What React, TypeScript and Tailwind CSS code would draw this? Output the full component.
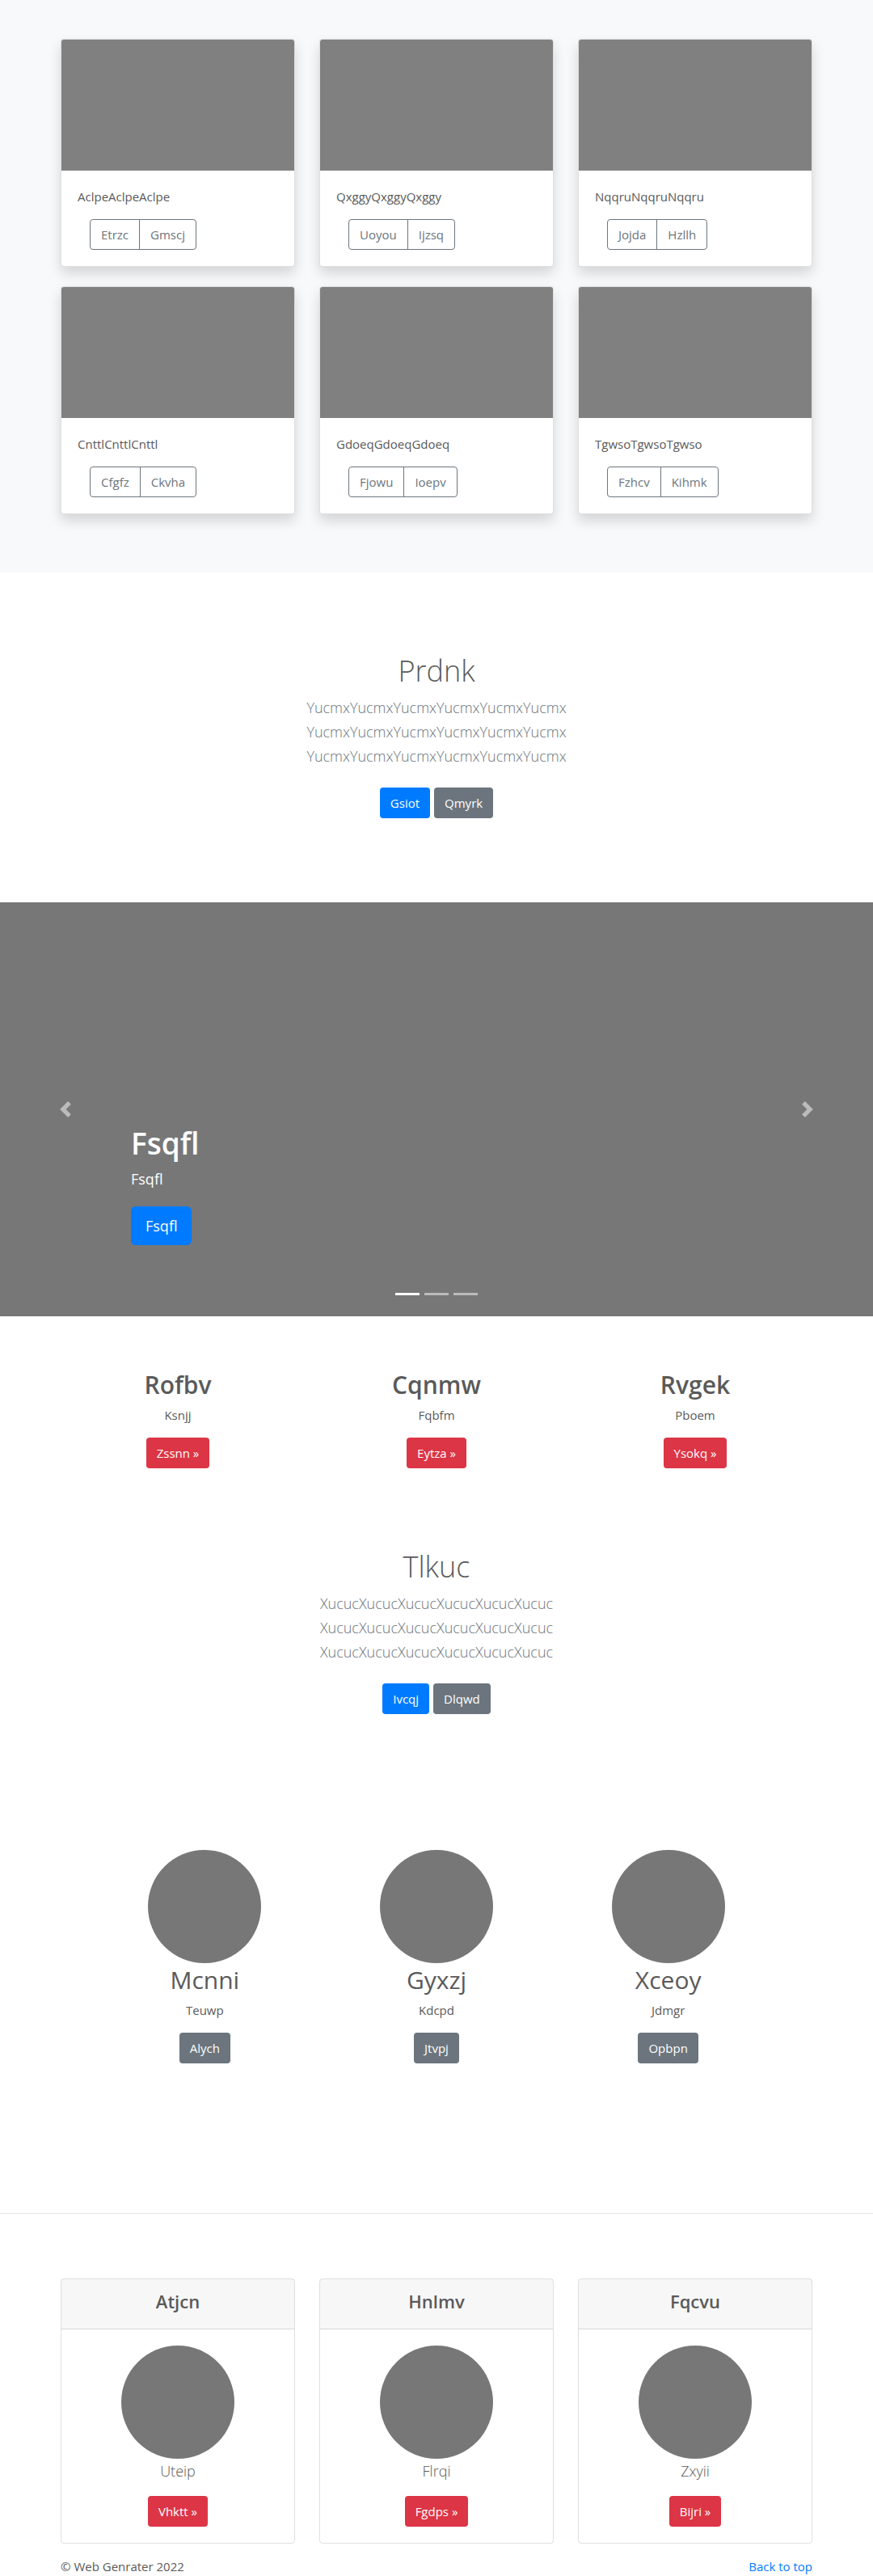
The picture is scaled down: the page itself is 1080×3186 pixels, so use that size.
const albumCards = [
  { text: "AclpeAclpeAclpe", actions: ["Etrzc", "Gmscj"] },
  { text: "QxggyQxggyQxggy", actions: ["Uoyou", "Ijzsq"] },
  { text: "NqqruNqqruNqqru", actions: ["Jojda", "Hzllh"] },
  { text: "CnttlCnttlCnttl", actions: ["Cfgfz", "Ckvha"] },
  { text: "GdoeqGdoeqGdoeq", actions: ["Fjowu", "Ioepv"] },
  { text: "TgwsoTgwsoTgwso", actions: ["Fzhcv", "Kihmk"] },
];

const features = [
  { title: "Rofbv", text: "Ksnjj", action: "Zssnn »" },
  { title: "Cqnmw", text: "Fqbfm", action: "Eytza »" },
  { title: "Rvgek", text: "Pboem", action: "Ysokq »" },
];

const profiles = [
  { title: "Mcnni", text: "Teuwp", action: "Alych" },
  { title: "Gyxzj", text: "Kdcpd", action: "Jtvpj" },
  { title: "Xceoy", text: "Jdmgr", action: "Opbpn" },
];

const plans = [
  { title: "Atjcn", text: "Uteip", action: "Vhktt »" },
  { title: "Hnlmv", text: "Flrqi", action: "Fgdps »" },
  { title: "Fqcvu", text: "Zxyii", action: "Bijri »" },
];

const tones = {
  primary: "bg-[#007bff]",
  secondary: "bg-[#6c757d]",
  danger: "bg-[#dc3545]",
};

function Button({ tone, children }: { tone: keyof typeof tones; children: string }) {
  return (
    <button type="button" className={`h-[38px] rounded px-[13px] text-white ${tones[tone]}`}>
      {children}
    </button>
  );
}

function AlbumCard({ text, actions }: { text: string; actions: string[] }) {
  return (
    <article className="rounded border border-black/[0.125] bg-white bg-clip-border shadow-[0_8px_16px_rgba(0,0,0,0.15)]">
      <div className="h-[162px] rounded-t-[3px] bg-[#808080]" />
      <div className="p-5">
        <p className="mb-4">{text}</p>
        <div className="ml-[15px] flex text-[#6c757d]">
          <button type="button" className="h-[38px] rounded-l border border-[#6c757d] px-[13px]">
            {actions[0]}
          </button>
          <button type="button" className="-ml-px h-[38px] rounded-r border border-[#6c757d] px-[13px]">
            {actions[1]}
          </button>
        </div>
      </div>
    </article>
  );
}

function Hero({ title, line, primary, secondary }: { title: string; line: string; primary: string; secondary: string }) {
  return (
    <section className="px-4 pt-24 pb-[104px] text-center">
      <h1 className="mb-1 text-[36px] leading-[52px] font-light">{title}</h1>
      <div className="mb-6 text-[18px] leading-[30px] font-light text-[#6c757d]">
        <p>{line}</p>
        <p>{line}</p>
        <p>{line}</p>
      </div>
      <div className="flex justify-center gap-[5px]">
        <Button tone="primary">{primary}</Button>
        <Button tone="secondary">{secondary}</Button>
      </div>
    </section>
  );
}

function Carousel() {
  return (
    <section aria-label="Carousel" className="relative flex h-[512px] flex-col justify-end bg-[#777] px-[15%] pb-[88px] text-white">
      <h1 className="mb-1 text-[37px] leading-[52px] font-semibold">Fsqfl</h1>
      <p className="mb-5 text-[18px] leading-7">Fsqfl</p>
      <div>
        <button type="button" className="h-12 rounded-md bg-[#007bff] px-[18px] text-[18px]">
          Fsqfl
        </button>
      </div>
      <button type="button" aria-label="Previous" className="absolute inset-y-0 left-0 flex w-[15%] items-center justify-center opacity-50">
        <svg viewBox="0 0 8 8" className="size-5" fill="#fff">
          <path d="M5.25 0l-4 4 4 4 1.5-1.5L4.25 4l2.5-2.5L5.25 0z" />
        </svg>
      </button>
      <button type="button" aria-label="Next" className="absolute inset-y-0 right-0 flex w-[15%] items-center justify-center opacity-50">
        <svg viewBox="0 0 8 8" className="size-5" fill="#fff">
          <path d="M2.75 0l-1.5 1.5L3.75 4l-2.5 2.5L2.75 8l4-4-4-4z" />
        </svg>
      </button>
      <div className="absolute inset-x-0 bottom-[26px] flex justify-center gap-1.5">
        <button type="button" aria-label="Slide 1" className="h-[3px] w-[30px] bg-white" />
        <button type="button" aria-label="Slide 2" className="h-[3px] w-[30px] bg-white/50" />
        <button type="button" aria-label="Slide 3" className="h-[3px] w-[30px] bg-white/50" />
      </div>
    </section>
  );
}

export default function App() {
  return (
    <div className="bg-white font-['Open_Sans',sans-serif] text-[15px] leading-6 text-[#5a5a5a]">
      <section className="bg-[#f8f9fa] pt-12 pb-[72px]">
        <div className="mx-auto grid max-w-[960px] grid-cols-3 gap-x-[30px] gap-y-6 px-[15px]">
          {albumCards.map((card) => (
            <AlbumCard key={card.text} {...card} />
          ))}
        </div>
      </section>

      <Hero title="Prdnk" line="YucmxYucmxYucmxYucmxYucmxYucmx" primary="Gsiot" secondary="Qmyrk" />

      <Carousel />

      <section className="mx-auto grid max-w-[960px] grid-cols-3 pt-16 text-center">
        {features.map((item) => (
          <div key={item.title}>
            <h2 className="mb-1 text-[30px] leading-[42px] font-semibold">{item.title}</h2>
            <p className="mb-4">{item.text}</p>
            <Button tone="danger">{item.action}</Button>
          </div>
        ))}
      </section>

      <Hero title="Tlkuc" line="XucucXucucXucucXucucXucucXucuc" primary="Ivcqj" secondary="Dlqwd" />

      <section className="mx-auto grid max-w-[960px] grid-cols-3 px-[50px] pt-16 pb-[105px] text-center">
        {profiles.map((item) => (
          <div key={item.title}>
            <div className="mx-auto size-[140px] rounded-full bg-[#777]" />
            <h2 className="mb-1 text-[30px] leading-[42px]">{item.title}</h2>
            <p className="mb-4">{item.text}</p>
            <Button tone="secondary">{item.action}</Button>
          </div>
        ))}
      </section>

      <hr className="my-20 border-t border-black/10" />

      <section className="mx-auto grid max-w-[960px] grid-cols-3 gap-x-[30px] px-[15px] text-center">
        {plans.map((item) => (
          <article key={item.title} className="rounded border border-black/[0.125]">
            <div className="border-b border-black/[0.125] bg-black/[0.03] pt-3 pb-[18px]">
              <h4 className="text-[22px] leading-[31px] font-semibold">{item.title}</h4>
            </div>
            <div className="p-5">
              <div className="mx-auto size-[140px] rounded-full bg-[#777]" />
              <p className="mb-4 text-[18px] leading-[30px] font-light">{item.text}</p>
              <Button tone="danger">{item.action}</Button>
            </div>
          </article>
        ))}
      </section>

      <footer className="mx-auto flex max-w-[960px] justify-between px-[15px] pt-4">
        <p>© Web Genrater 2022</p>
        <a href="#" className="text-[#007bff]">
          Back to top
        </a>
      </footer>
    </div>
  );
}
